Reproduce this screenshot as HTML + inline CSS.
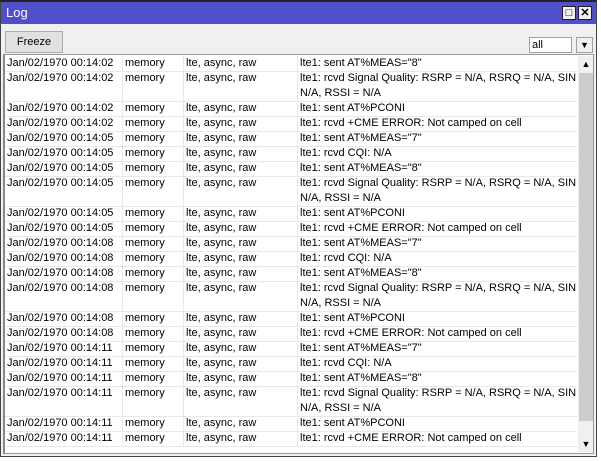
<!DOCTYPE html><html><head><style>
body{margin:0;width:601px;height:461px;background:#fff;position:relative;overflow:hidden;font-family:"Liberation Sans",Arial,sans-serif;font-size:11px;}
.win{position:absolute;left:0;top:0;width:597px;height:457px;background:#f0f0f0;border:1px solid #444;border-top:2px solid #222;box-sizing:border-box;}
.title{position:absolute;left:0;top:0;width:595px;height:22px;background:#4f4fc9;color:#fff;font-size:13px;line-height:22px;padding-left:5px;box-sizing:border-box;}
.tb{position:absolute;top:4px;width:14px;height:14px;background:#f0f0f0;border:1px solid #222;box-sizing:border-box;font-size:11px;line-height:12px;text-align:center;color:#000;font-weight:bold}
.btn{position:absolute;left:4px;top:29px;width:58px;height:22px;border:1px solid #adadad;background:#e1e1e1;box-sizing:border-box;text-align:center;line-height:20px;font-size:11px;}
.sel{position:absolute;left:528px;top:35px;width:43px;height:16px;background:#fff;border:1px solid #a0a0a0;box-sizing:border-box;line-height:14px;padding-left:2px;}
.selb{position:absolute;left:575px;top:35px;width:17px;height:16px;background:#f0f0f0;border:1px solid #a0a0a0;box-sizing:border-box;font-size:9px;text-align:center;line-height:14px;}
.list{position:absolute;left:3px;top:54px;width:591px;height:400px;background:#fff;border:1px solid #999;border-left:2px solid #888;box-sizing:border-box;overflow:hidden;}
.row{position:absolute;left:0;width:572px;border-bottom:1px solid #e8e8e8;}
.c{position:absolute;top:0;line-height:15px;white-space:nowrap;height:100%;border-right:1px solid #e8e8e8;box-sizing:border-box;padding-left:2px;}
.sb{position:absolute;left:573px;top:1px;width:16px;height:396px;background:#f0f0f0;}
</style></head><body>
<div class="win">
<div class="title">Log</div>
<div class="tb" style="left:561px">□</div>
<div class="tb" style="left:577px">✕</div>
<div class="btn">Freeze</div>
<div class="sel">all</div>
<div class="selb">&#9660;</div>
</div>
<div class="list" id="l">
<div class="sb">
<div style="position:absolute;left:0;top:0;width:16px;height:16px;font-size:9px;text-align:center;line-height:16px;background:#f0f0f0">▲</div>
<div style="position:absolute;left:1px;top:17px;width:14px;height:348px;background:#cdcdcd"></div>
<div style="position:absolute;left:0;top:380px;width:16px;height:16px;font-size:9px;text-align:center;line-height:16px">▼</div>
</div>
</div>
<script>
var rows=[["00:14:02","lte1: sent AT%MEAS=\"8\""],["00:14:02","lte1: rcvd Signal Quality: RSRP = N/A, RSRQ = N/A, SINR = N/A,<br>N/A, RSSI = N/A",2],["00:14:02","lte1: sent AT%PCONI"],["00:14:02","lte1: rcvd +CME ERROR: Not camped on cell"],["00:14:05","lte1: sent AT%MEAS=\"7\""],["00:14:05","lte1: rcvd CQI: N/A"],["00:14:05","lte1: sent AT%MEAS=\"8\""],["00:14:05","lte1: rcvd Signal Quality: RSRP = N/A, RSRQ = N/A, SINR = N/A,<br>N/A, RSSI = N/A",2],["00:14:05","lte1: sent AT%PCONI"],["00:14:05","lte1: rcvd +CME ERROR: Not camped on cell"],["00:14:08","lte1: sent AT%MEAS=\"7\""],["00:14:08","lte1: rcvd CQI: N/A"],["00:14:08","lte1: sent AT%MEAS=\"8\""],["00:14:08","lte1: rcvd Signal Quality: RSRP = N/A, RSRQ = N/A, SINR = N/A,<br>N/A, RSSI = N/A",2],["00:14:08","lte1: sent AT%PCONI"],["00:14:08","lte1: rcvd +CME ERROR: Not camped on cell"],["00:14:11","lte1: sent AT%MEAS=\"7\""],["00:14:11","lte1: rcvd CQI: N/A"],["00:14:11","lte1: sent AT%MEAS=\"8\""],["00:14:11","lte1: rcvd Signal Quality: RSRP = N/A, RSRQ = N/A, SINR = N/A,<br>N/A, RSSI = N/A",2],["00:14:11","lte1: sent AT%PCONI"],["00:14:11","lte1: rcvd +CME ERROR: Not camped on cell"]];
var h="",y=1;
rows.forEach(function(r){var ht=(r[2]||1)*15;
h+='<div class="row" style="top:'+y+'px;height:'+ht+'px"><div class="c" style="left:0;width:118px">Jan/02/1970 '+r[0]+'</div><div class="c" style="left:118px;width:61px">memory</div><div class="c" style="left:179px;width:114px">lte, async, raw</div><div class="c" style="left:293px;width:279px;border:0;overflow:hidden">'+r[1]+'</div></div>';y+=ht;});
document.getElementById("l").insertAdjacentHTML("afterbegin",h);
</script>
</body></html>
